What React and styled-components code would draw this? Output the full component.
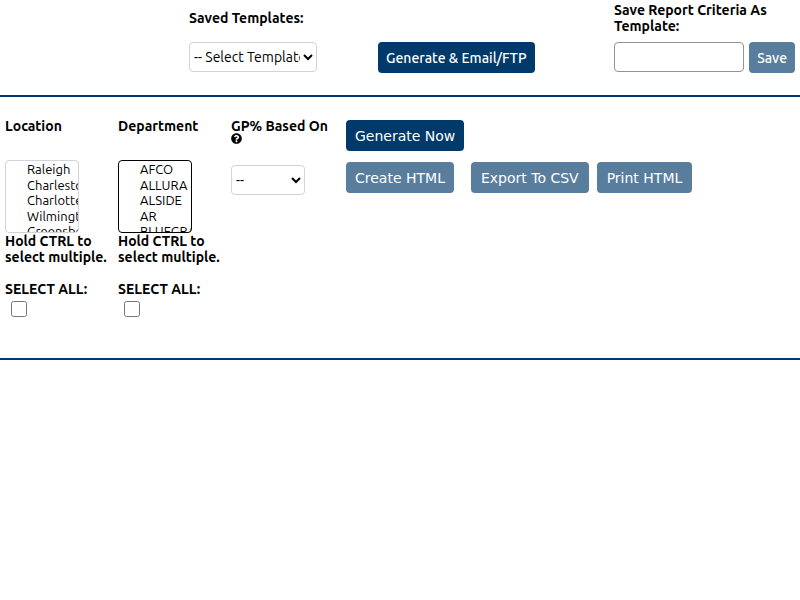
import React, { useState } from "react";
import styled, { createGlobalStyle } from "styled-components";

const GlobalStyle = createGlobalStyle`
  *, *::before, *::after { box-sizing: border-box; }
  body {
    margin: 0;
    background: #fff;
    color: #000;
    font: 14px/16px Ubuntu, "Noto Sans", sans-serif;
  }
`;

const TemplateBar = styled.header`
  display: grid;
  grid-template-columns:
    minmax(0, 184fr) minmax(0, 189fr) minmax(0, 236fr) minmax(0, 181fr);
  align-items: end;
  padding: 2px 5px 22px 5px;
  border-bottom: 2px solid #003a6a;
`;

const Field = styled.div`
  display: flex;
  flex-direction: column;
  align-items: flex-start;
`;

const SavedField = styled(Field)`
  grid-column: 2;
  gap: 16px;
  padding-bottom: 1px;
`;

const SaveField = styled(Field)`
  gap: 8px;
`;

const Label = styled.label`
  font-size: 14px;
  font-weight: 700;
  line-height: 16px;
  white-space: nowrap;
`;

const SaveRow = styled.div`
  display: flex;
  gap: 5px;
  align-self: stretch;
`;

const TextInput = styled.input`
  flex: 1;
  min-width: 0;
  height: 30px;
  padding: 4px;
  border: 1px solid #949494;
  border-radius: 4px;
  font: inherit;
  background: #fff;
`;

const Select = styled.select`
  width: ${(p) => p.$width};
  height: 30px;
  padding: 0;
  border: 1px solid #ced4da;
  border-radius: 4px;
  background: #fff;
  color: #000;
  font: inherit;
`;

const Button = styled.button`
  height: 31px;
  padding: 0 ${(p) => p.$pad || "9px"};
  border: 0;
  border-radius: 4px;
  background: ${(p) => (p.$primary ? "#003a6a" : "#587d9d")};
  color: #fff;
  font-family: ${(p) => (p.$wide ? 'Verdana, "DejaVu Sans", sans-serif' : "inherit")};
  font-size: 14px;
  font-weight: ${(p) => (p.$wide ? 400 : 500)};
  line-height: 16px;
  white-space: nowrap;
`;

const Filters = styled.main`
  display: grid;
  grid-template-columns: 113px 113px 115px 1fr;
  padding: 21px 5px 41px;
  border-bottom: 2px solid #003a6a;
`;

const ListBox = styled.select`
  width: 74px;
  height: 73px;
  margin-top: 26px;
  padding: 1px 0 0;
  border: 1px solid ${(p) => (p.$active ? "#000" : "#ced4da")};
  border-radius: 4px;
  outline: 0;
  overflow: hidden;
  scrollbar-width: none;
  background: #fff;
  color: #000;
  font: inherit;
  font-size: 13px;

  option {
    min-height: 0;
    padding: 0 0 2px 21px;
  }

  option:nth-child(even) {
    padding-bottom: 1px;
  }
`;

const Hint = styled.p`
  margin: 0 0 16px;
  font-weight: 700;
  white-space: nowrap;
`;

const CheckBox = styled.input`
  width: 16px;
  height: 16px;
  margin: 4px 6px 0;
`;

const HelpIcon = styled.svg`
  display: block;
  width: 11px;
  height: 11px;
  margin: -1px 0 21px;
`;

const Actions = styled.div`
  display: flex;
  flex-direction: column;
  align-items: flex-start;
  gap: 11px;
  padding-top: 2px;
`;

const ActionRow = styled.div`
  display: flex;
  gap: 8px;
`;

const CreateSlot = styled.div`
  padding-right: 9px;
`;

function MultiFilter({ id, title, options, active }) {
  const [selected, setSelected] = useState([]);
  return (
    <Field>
      <Label htmlFor={id}>{title}</Label>
      <ListBox
        id={id}
        multiple
        size={4}
        $active={active}
        value={selected}
        onChange={(e) => setSelected(Array.from(e.target.selectedOptions, (o) => o.value))}
      >
        {options.map((o) => (
          <option key={o}>{o}</option>
        ))}
      </ListBox>
      <Hint>
        Hold CTRL to
        <br />
        select multiple.
      </Hint>
      <Label htmlFor={id + "-all"}>SELECT ALL:</Label>
      <CheckBox
        type="checkbox"
        id={id + "-all"}
        checked={selected.length === options.length}
        onChange={(e) => setSelected(e.target.checked ? options : [])}
      />
    </Field>
  );
}

export default function App() {
  return (
    <>
      <GlobalStyle />
      <TemplateBar>
        <SavedField>
          <Label htmlFor="saved">Saved Templates:</Label>
          <Select id="saved" $width="128px">
            <option>-- Select Template --</option>
          </Select>
        </SavedField>
        <div>
          <Button $primary $pad="8px">Generate &amp; Email/FTP</Button>
        </div>
        <SaveField>
          <Label htmlFor="template">
            Save Report Criteria As
            <br />
            Template:
          </Label>
          <SaveRow>
            <TextInput id="template" type="text" />
            <Button $pad="8px">Save</Button>
          </SaveRow>
        </SaveField>
      </TemplateBar>
      <Filters>
        <MultiFilter
          id="location"
          title="Location"
          options={["Raleigh", "Charleston", "Charlotte", "Wilmington", "Greensboro"]}
        />
        <MultiFilter
          id="department"
          title="Department"
          active
          options={["AFCO", "ALLURA", "ALSIDE", "AR", "BLUEGRASS"]}
        />
        <Field>
          <Label htmlFor="gp">GP% Based On</Label>
          <HelpIcon viewBox="0 0 512 512" role="img" aria-label="Help">
            <path d="M504 256c0 137-111 248-248 248S8 393 8 256 119 8 256 8s248 111 248 248zM262.7 90c-54.5 0-89.3 23-116.5 63.8-3.6 5.3-2.4 12.4 2.7 16.3l34.7 26.3c5.200 3.900 12.600 3 16.700-2.100 17.900-22.700 30.100-35.800 57.300-35.800 20.400 0 45.700 13.100 45.700 33 0 15-12.400 22.700-32.500 34C247.100 238.500 216 254.900 216 296v4c0 6.600 5.400 12 12 12h56c6.600 0 12-5.400 12-12v-1.300c0-28.500 83.200-29.600 83.200-106.700 0-58-60.200-102-116.500-102zM256 338c-25.400 0-46 20.600-46 46s20.600 46 46 46 46-20.600 46-46-20.600-46-46-46z" />
          </HelpIcon>
          <Select id="gp" $width="74px">
            <option>--</option>
          </Select>
        </Field>
        <Actions>
          <Button $primary $wide>Generate Now</Button>
          <ActionRow>
            <CreateSlot>
              <Button $wide>Create HTML</Button>
            </CreateSlot>
            <Button $wide $pad="10px">Export To CSV</Button>
            <Button $wide $pad="10px">Print HTML</Button>
          </ActionRow>
        </Actions>
      </Filters>
    </>
  );
}
